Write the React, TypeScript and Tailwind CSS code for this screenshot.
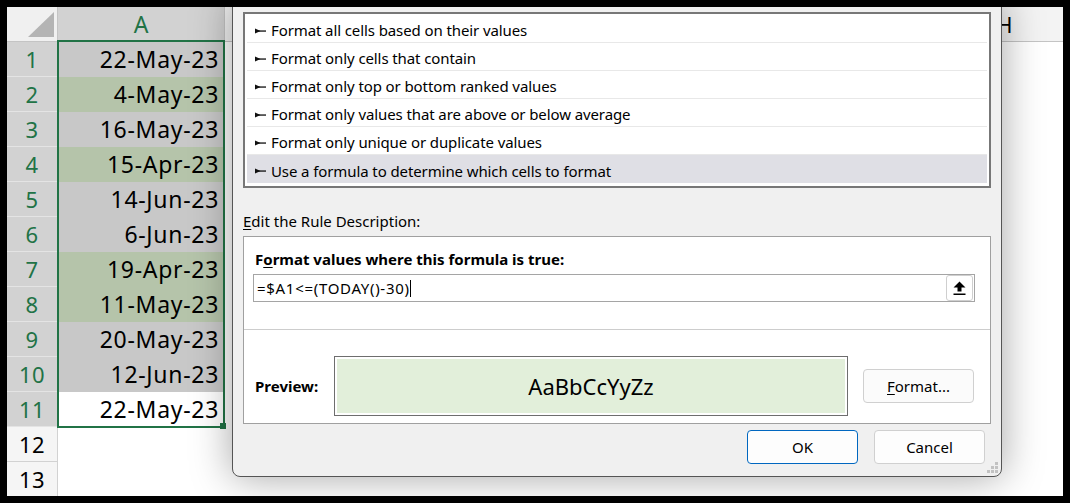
import React from 'react'

const ui = "font-['Noto_Sans',sans-serif]"

const rows = [
  { v: '22-May-23', fill: 'bg-[#c8c8c8]' },
  { v: '4-May-23', fill: 'bg-[#b5c4aa]' },
  { v: '16-May-23', fill: 'bg-[#c8c8c8]' },
  { v: '15-Apr-23', fill: 'bg-[#b5c4aa]' },
  { v: '14-Jun-23', fill: 'bg-[#c8c8c8]' },
  { v: '6-Jun-23', fill: 'bg-[#c8c8c8]' },
  { v: '19-Apr-23', fill: 'bg-[#b5c4aa]' },
  { v: '11-May-23', fill: 'bg-[#b5c4aa]' },
  { v: '20-May-23', fill: 'bg-[#c8c8c8]' },
  { v: '12-Jun-23', fill: 'bg-[#c8c8c8]' },
  { v: '22-May-23', fill: 'bg-white' },
]

const ruleTypes = [
  'Format all cells based on their values',
  'Format only cells that contain',
  'Format only top or bottom ranked values',
  'Format only values that are above or below average',
  'Format only unique or duplicate values',
  'Use a formula to determine which cells to format',
]

// columns B..G sit under the dialog, only H peeks out
const otherCols = ['', '', '', '', '', '', 'H']

function Bullet() {
  return (
    <svg width="11" height="6" viewBox="0 0 11 6" className="shrink-0">
      <path d="M0 0.6 L5.5 3 L0 5.4 Z" fill="#111" />
      <rect x="0" y="2.4" width="11" height="1.3" fill="#111" />
    </svg>
  )
}

function RefIcon() {
  return (
    <svg width="13" height="15" viewBox="0 0 13 15">
      <path d="M6.5 0.5 L12.5 6.5 L8.5 6.5 L8.5 10.5 L4.5 10.5 L4.5 6.5 L0.5 6.5 Z" fill="#000" />
      <rect x="0.5" y="12.5" width="12" height="1.5" fill="#000" />
    </svg>
  )
}

function Grip() {
  return (
    <svg width="12" height="12" viewBox="0 0 12 12">
      {[
        [8, 0],
        [4, 4],
        [8, 4],
        [0, 8],
        [4, 8],
        [8, 8],
      ].map(([x, y]) => (
        <rect key={`${x}-${y}`} x={x} y={y} width="3" height="3" fill="#c2c2c2" />
      ))}
    </svg>
  )
}

function Sheet() {
  return (
    <div className={`${ui} text-[22px] text-black`}>
      {/* column headers */}
      <div className="flex h-[35px]">
        <div className="w-[51px] shrink-0 bg-[#f0f0f0] border-r border-b border-[#c4c4c4] flex items-end justify-end pr-[3px] pb-[4px]">
          <svg width="26" height="25" viewBox="0 0 26 25">
            <path d="M26 0 L26 25 L0 25 Z" fill="#b4b4b4" />
          </svg>
        </div>
        <div className="w-[167px] shrink-0 bg-[#d2d2d2] border-r border-b border-[#c4c4c4] flex items-center justify-center text-[#217346] text-[23px]">
          A
        </div>
        {otherCols.map((c, i) => (
          <div
            key={i}
            className="w-[120px] shrink-0 bg-[#f3f3f3] border-r border-b border-[#c4c4c4] flex items-center justify-center"
          >
            {c}
          </div>
        ))}
      </div>

      {/* rows */}
      {rows.map((r, i) => (
        <div key={i} className="flex h-[35px]">
          <div className="w-[51px] shrink-0 bg-[#d2d2d2] border-r border-b border-r-[#c4c4c4] border-b-[#e4e4e4] flex items-center justify-center text-[#217346] tracking-[0.5px]">
            {i + 1}
          </div>
          <div
            className={`w-[167px] shrink-0 ${r.fill} flex items-center justify-end pr-[6px] text-[23px] tracking-[0.7px]`}
          >
            {r.v}
          </div>
        </div>
      ))}
      {[12, 13].map((n) => (
        <div key={n} className="flex h-[35px]">
          <div className="w-[51px] shrink-0 bg-[#f5f5f5] border-r border-b border-[#d2d2d2] flex items-center justify-center tracking-[0.5px]">
            {n}
          </div>
          <div className="w-[167px] shrink-0 bg-white" />
        </div>
      ))}
    </div>
  )
}

function Dialog() {
  return (
    <div
      className={`${ui} absolute left-[225px] top-[-10px] w-[770px] h-[480px] bg-[#f0f0f0] border border-[#555555] rounded-b-[8px] shadow-[0_0_40px_rgba(0,0,0,0.36)] pt-[14px] px-[10px] pb-[12px] flex flex-col text-[15px] text-black`}
    >
      {/* rule type list */}
      <div className="h-[176px] shrink-0 border-2 border-[#777777] bg-white pt-[1px] px-[2px] tracking-[-0.1px]">
        {ruleTypes.map((t, i) => (
          <div
            key={t}
            className={`h-[28px] flex items-center gap-[5px] pl-[8px] pt-[4px] ${
              i === ruleTypes.length - 1 ? 'bg-[#dfdfe5]' : 'border-b border-[#e8e8e8]'
            }`}
          >
            <Bullet />
            <span>{t}</span>
          </div>
        ))}
      </div>

      <div className="mt-[23px] mb-[5px] h-[20px] leading-[20px]">
        <span className="underline underline-offset-2">E</span>dit the Rule Description:
      </div>

      {/* rule description */}
      <div className="h-[188px] shrink-0 border border-[#a0a0a0] bg-white pt-[12px] pb-[7px] flex flex-col">
        <div className="h-[20px] leading-[20px] pl-[11px] font-bold">
          F<span className="underline underline-offset-2">o</span>rmat values where this formula is true:
        </div>
        <div className="mt-[5px] ml-[9px] mr-[15px] h-[28px] border border-[#a5a5a5] flex items-center justify-between pl-[3px]">
          <div className="flex items-center">
            <span className="tracking-[0.7px]">=$A1&lt;=(TODAY()-30)</span>
            <span className="w-px h-[17px] bg-black" />
          </div>
          <div className="mr-[1px] w-[27px] h-[26px] border border-[#cfcfcf] rounded-[3px] bg-white flex items-center justify-center">
            <RefIcon />
          </div>
        </div>
        <div className="mt-[27px] h-px bg-[#cdcdcd]" />
        <div className="mt-[26px] h-[60px] flex items-center pl-[11px]">
          <div className="w-[79px] font-bold">Preview:</div>
          <div className="w-[514px] h-[60px] border border-[#6e6e6e] p-[2px]">
            <div className="w-full h-full bg-[#e2efda] flex items-center justify-center text-[22px]">
              AaBbCcYyZz
            </div>
          </div>
          <div className="ml-[15px] w-[111px] h-[34px] border border-[#d0d0d0] rounded-[4px] bg-[#fbfbfb] flex items-center justify-center">
            <span className="underline underline-offset-2">F</span>ormat...
          </div>
        </div>
      </div>

      {/* buttons */}
      <div className="mt-[6px] flex justify-end gap-[16px] pr-[6px]">
        <div className="w-[111px] h-[34px] border border-[#0067c0] rounded-[4px] bg-[#fdfdfd] flex items-center justify-center">
          OK
        </div>
        <div className="w-[111px] h-[34px] border border-[#d0d0d0] rounded-[4px] bg-[#fdfdfd] flex items-center justify-center">
          Cancel
        </div>
      </div>

      <div className="absolute right-[2px] bottom-[2px]">
        <Grip />
      </div>
    </div>
  )
}

export default function App() {
  return (
    <div className="w-[1070px] h-[503px] bg-black p-[7px]">
      <div className="relative w-full h-full overflow-hidden bg-white">
        <Sheet />

        {/* selection outline + fill handle */}
        <div className="absolute left-[50px] top-[33px] w-[168px] h-[388px] border-2 border-[#217346]" />
        <div className="absolute left-[213px] top-[416px] w-[6px] h-[6px] bg-[#217346]" />

        <Dialog />
      </div>
    </div>
  )
}
